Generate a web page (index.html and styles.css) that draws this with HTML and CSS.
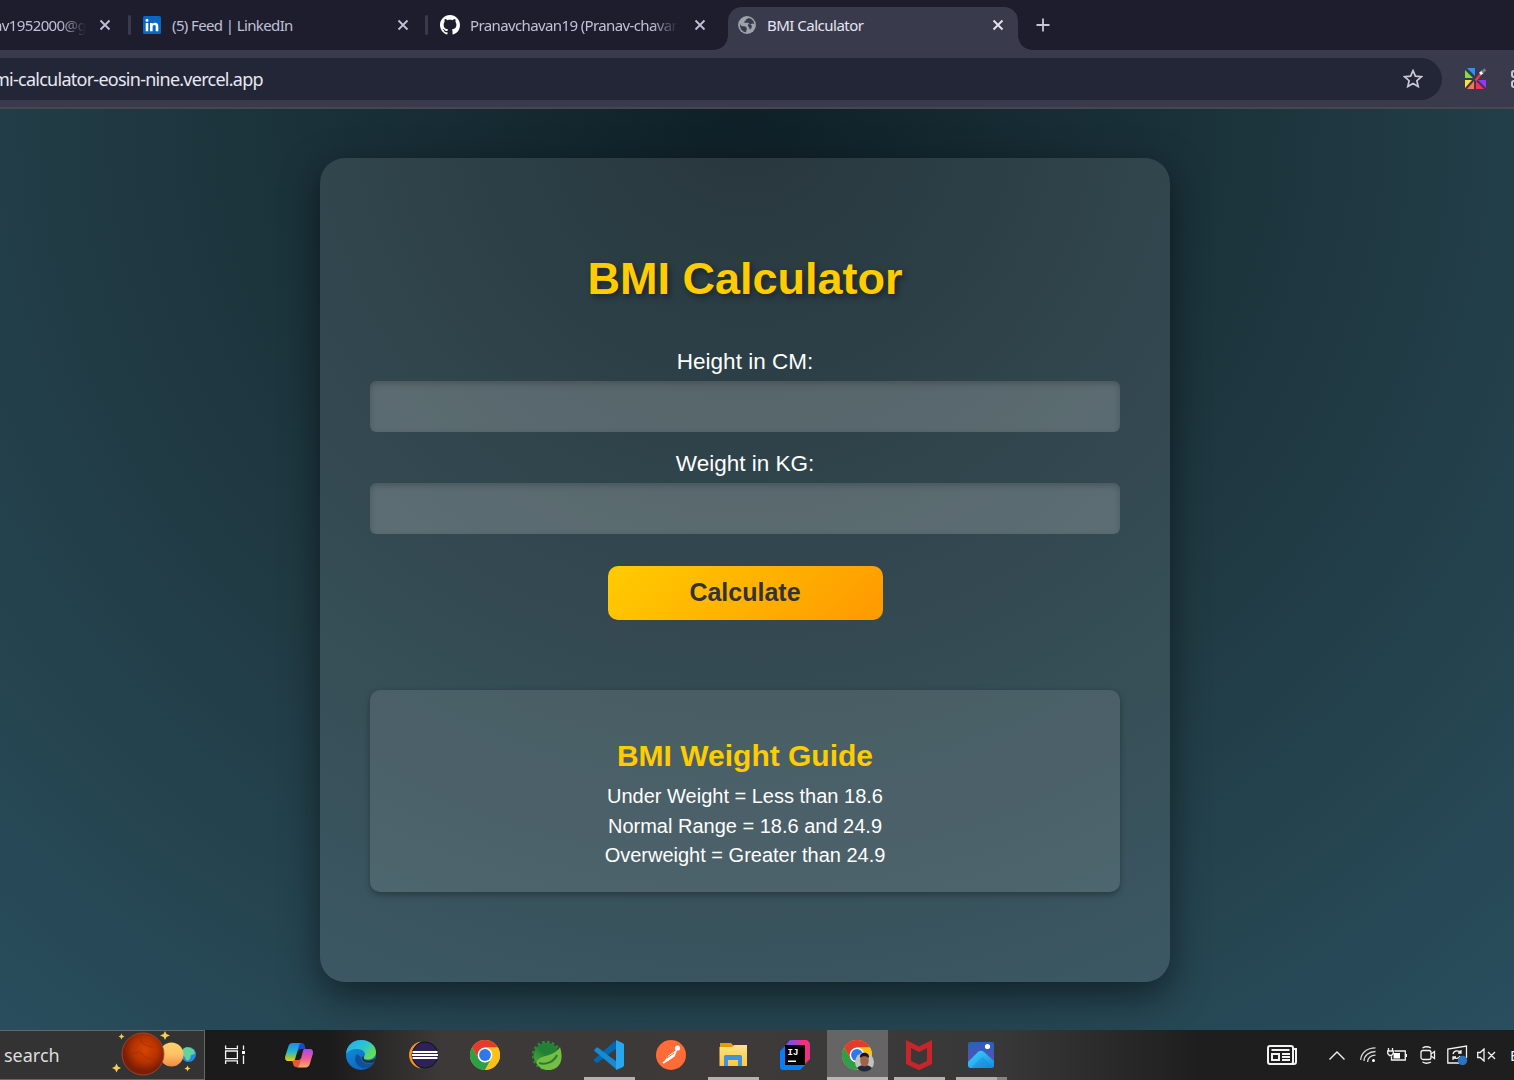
FILE: index.html
```html
<!DOCTYPE html>
<html lang="en">
<head>
<meta charset="utf-8">
<title>BMI Calculator</title>
<link rel="stylesheet" href="styles.css">
</head>
<body>
<div class="screen">
  <header class="browser">
    <div class="tabs">
      <div class="tab tab-mail">
        <span class="tab-title fade">av1952000@g</span>
        <svg class="close" viewBox="0 0 12 12"><path d="M1.5 1.5l9 9M10.5 1.5l-9 9"/></svg>
      </div>
      <i class="divider"></i>
      <div class="tab tab-linkedin">
        <svg class="favicon" viewBox="0 0 18 18"><rect width="18" height="18" rx="1.5" fill="#0a66c2"/><path fill="#fff" d="M2.7 7h2.6v8.3H2.7zM4 2.8a1.5 1.5 0 1 1 0 3 1.5 1.5 0 0 1 0-3zM7 7h2.5v1.2c.5-.9 1.400-1.4 2.600-1.400 2.400 0 3.200 1.500 3.200 3.800v4.700h-2.600v-4.200c0-1.200-.2-2.100-1.400-2.100-1.300 0-1.700.9-1.700 2.100v4.200H7z"/></svg>
        <span class="tab-title">(5) Feed | LinkedIn</span>
        <svg class="close" viewBox="0 0 12 12"><path d="M1.500 1.500l9 9M10.500 1.500l-9 9"/></svg>
      </div>
      <i class="divider"></i>
      <div class="tab tab-github">
        <svg class="favicon github" viewBox="0 0 16 16"><path fill="#fff" d="M8 0C3.580 0 0 3.580 0 8c0 3.540 2.290 6.530 5.470 7.590.4.070.55-.17.55-.38 0-.19-.01-.82-.01-1.490-2.010.37-2.530-.49-2.690-.94-.09-.23-.48-.94-.82-1.130-.28-.15-.68-.52-.01-.53.63-.01 1.080.58 1.230.82.72 1.210 1.870.87 2.330.66.07-.52.28-.87.51-1.070-1.780-.2-3.640-.89-3.640-3.950 0-.87.31-1.590.82-2.150-.08-.2-.36-1.020.08-2.120 0 0 .67-.21 2.200.82.64-.18 1.320-.27 2-.27s1.360.09 2 .27c1.530-1.040 2.200-.82 2.200-.82.44 1.100.16 1.920.08 2.120.51.56.82 1.270.82 2.150 0 3.070-1.870 3.750-3.650 3.950.29.25.54.73.54 1.480 0 1.070-.01 1.930-.01 2.200 0 .21.15.46.55.38A8.010 8.010 0 0 0 16 8c0-4.420-3.580-8-8-8z"/></svg>
        <span class="tab-title fade">Pranavchavan19 (Pranav-chavan</span>
        <svg class="close" viewBox="0 0 12 12"><path d="M1.500 1.500l9 9M10.500 1.500l-9 9"/></svg>
      </div>
      <div class="tab tab-active">
        <svg class="favicon" viewBox="0 0 18 18"><circle cx="9" cy="9" r="8.900" fill="#9da3ab"/><path fill="#393b4d" d="M2 7.500c.4 2.500 2.300 3 4.300 2.800 1.500 0 1.300 1.200 2.300 1.300l.2 1.500c.2 1.200-.8 1.200-.8 3.100-3.500-.4-6.500-3.500-6-8.700zM10.500 1.900c-1 1.100-2.600 1-2.700 2.300 0 .9-1.800.8-1.700 2 .3 1.100 2.200.5 3.700.5 1.200.1 1.200 1.500 2.400 1.600 1 .1 1.100-.9 2.400-.8l1.700.8C16.200 5 14 2.500 10.500 1.900zM10 8.300c1.500-.4 2.900.1 3.700 1.200.4 1.900-.4 3.500-1.900 3.900l-.7-2.200c-.9-.2-1.500-1.500-1.100-2.900z"/></svg>
        <span class="tab-title">BMI Calculator</span>
        <svg class="close" viewBox="0 0 12 12"><path d="M1.500 1.500l9 9M10.500 1.500l-9 9"/></svg>
      </div>
      <svg class="new-tab" viewBox="0 0 14 14"><path d="M7 .5v13M.5 7h13"/></svg>
    </div>
    <div class="toolbar">
      <div class="address">
        <span class="url">mi-calculator-eosin-nine.vercel.app</span>
        <svg class="star" viewBox="0 0 20 20"><path d="M10 1.700l2.400 5.500 6 .5-4.500 4 1.300 5.900L10 14.500l-5.200 3.100 1.300-5.900-4.500-4 6-.5z"/></svg>
      </div>
      <svg class="extension" viewBox="0 0 22 22"><path fill="#2893ff" d="M2 0h8v8z"/><path fill="#83d94c" d="M0 2l8 8H0z"/><path fill="#ffe23c" d="M0 12h7l-7 8z"/><path fill="#ff7250" d="M9 13v8H2z"/><path fill="#ff2d55" d="M11 13l8 8h-8z"/><path fill="#9138ff" d="M13 12h8v8z"/><path d="M10.500 12.500l5-6" stroke="#ff304e" stroke-width="2.400"/><path d="M15 6l2.500-2" stroke="#fff" stroke-width="3"/><path d="M17 4l3.500-2.500" stroke="#77787f" stroke-width="3"/></svg>
      <svg class="apps" viewBox="0 0 8 18" fill="none" stroke="#c9cada" stroke-width="2"><rect x="1" y="1" width="7" height="6" rx="2"/><rect x="1" y="11" width="7" height="6" rx="2"/></svg>
    </div>
  </header>

  <main class="page">
    <section class="card">
      <h1>BMI Calculator</h1>
      <form class="form">
        <label for="height">Height in CM:</label>
        <input id="height" type="text">
        <label for="weight">Weight in KG:</label>
        <input id="weight" type="text">
        <button type="button">Calculate</button>
      </form>
      <div class="guide">
        <h2>BMI Weight Guide</h2>
        <p>Under Weight = Less than 18.6</p>
        <p>Normal Range = 18.6 and 24.9</p>
        <p>Overweight = Greater than 24.9</p>
      </div>
    </section>
  </main>

  <footer class="taskbar">
    <svg class="defs" width="0" height="0">
      <defs>
        <radialGradient id="mars" cx=".55" cy=".4"><stop offset="0" stop-color="#d94400"/><stop offset=".6" stop-color="#b53300"/><stop offset="1" stop-color="#7c1e06"/></radialGradient>
        <linearGradient id="venus" x2="0" y2="1"><stop offset="0" stop-color="#ffd36b"/><stop offset=".5" stop-color="#ffc065"/><stop offset="1" stop-color="#ef8c43"/></linearGradient>
        <linearGradient id="copA" x2="0" y2="1"><stop offset="0" stop-color="#1b8df0"/><stop offset=".5" stop-color="#28b8cf"/><stop offset=".8" stop-color="#9bc53e"/><stop offset="1" stop-color="#f4cc20"/></linearGradient>
        <linearGradient id="copB" x2="0" y2="1"><stop offset="0" stop-color="#a24cf0"/><stop offset=".5" stop-color="#ea5a95"/><stop offset="1" stop-color="#ffae5c"/></linearGradient>
        <linearGradient id="edgeA" x1="0" x2="1" y2=".6"><stop offset="0" stop-color="#28a9ee"/><stop offset=".6" stop-color="#2cc6cf"/><stop offset="1" stop-color="#68e04c"/></linearGradient>
        <linearGradient id="edgeB" x2=".5" y2="1"><stop offset="0" stop-color="#1592df"/><stop offset="1" stop-color="#0b67c0"/></linearGradient>
        <linearGradient id="ij" x1=".3" x2="1"><stop offset="0" stop-color="#8a4ae0"/><stop offset=".7" stop-color="#ff2d70"/><stop offset="1" stop-color="#e53293"/></linearGradient>
        <linearGradient id="photo" x2="0" y2="1"><stop offset="0" stop-color="#2463bb"/><stop offset="1" stop-color="#7047b8"/></linearGradient>
        <linearGradient id="hill" x2="1" y2="1"><stop offset="0" stop-color="#3fd6fb"/><stop offset="1" stop-color="#128ce0"/></linearGradient>
        <linearGradient id="folder" x2="0" y2="1"><stop offset="0" stop-color="#ffe18a"/><stop offset="1" stop-color="#fdc83d"/></linearGradient>
        <linearGradient id="spring" x1="1" x2="0" y2="1"><stop offset="0" stop-color="#2a7f36"/><stop offset=".5" stop-color="#1f8134"/><stop offset="1" stop-color="#61b53c"/></linearGradient>
        <symbol id="chrome" viewBox="0 0 30 30"><circle cx="15" cy="15" r="15" fill="#fbc116"/><path fill="#e33b2e" d="M2 7.500A15 15 0 0 1 28 7.500H15L8.500 19z"/><path fill="#2c9f47" d="M2 7.500l6.500 11.300 6.500 3.700 6-3.500L15 30A15 15 0 0 1 2 7.500z"/><path fill="#fbc116" d="M15 7.500h13A15 15 0 0 1 15 30l6.500-11.300z"/><circle cx="15" cy="15" r="7.400" fill="#fff"/><circle cx="15" cy="15" r="5.900" fill="#2d78ea"/></symbol>
      </defs>
    </svg>
    <div class="search">
      <span>search</span>
      <svg class="planets" viewBox="0 0 86 48"><circle cx="75.500" cy="23.500" r="7.500" fill="#2588e7"/><path fill="#62d39a" d="M70 18c3-3 7-2 11 1l1 4-4 1-1 4-3 2-3-5-3-2z"/><circle cx="58.500" cy="23.500" r="12" fill="url(#venus)"/><circle cx="30" cy="23" r="21" fill="url(#mars)" stroke="#a64b32" stroke-width=".8"/><path d="M15 20c4 7 10-3 14 3s11 4 17 8M28 4c-3 8 5 11 12 12M18 34c9 3 17 3 25-2" fill="none" stroke="#9c2b05" stroke-width="1.500" opacity=".35"/><g fill="#f8cf55"><path d="M52 0l1.400 3.100L57 4.500l-3.600 1.400L52 9l-1.400-3.100L47 4.500l3.600-1.400z"/><path d="M8.500 2.500l.9 2.100 2.100.9-2.100.9-.9 2.100-.9-2.100-2.100-.9 2.100-.9z"/><path d="M3.500 32.500l1.400 3.100L8 37l-3.100 1.400-1.400 3.100-1.400-3.100L-1 37l3.100-1.400z"/><path d="M74.500 34.500l.9 2.100 2.100.9-2.100.9-.9 2.100-.9-2.100-2.100-.9 2.100-.9z"/></g></svg>
    </div>
    <svg class="task-view" viewBox="0 0 22 20" fill="none" stroke="#f4f4f4" stroke-width="1.300"><path d="M1.600.5v3.200h11.800V.5M1.600 19v-3.200h11.800V19M1.600 6h11.800v7.600H1.600zM19.500.5v4.300M19.500 10.500V19"/><path fill="#fff" stroke="none" d="M18 6h3v3h-3z"/></svg>
    <nav class="apps-row">
      <a class="app"><svg viewBox="0 0 30 30"><path fill="#1b48cc" d="M13 3h4.500c2 0 2.800 1 3.300 3l.7 3h-4.200c-2 0-3 1-3.500 3z"/><path fill="#e8563a" d="M8 20h7l4-3-2.300 7c-.8 2.300-1.700 3-3.500 3H12c-1.700 0-2.400-1-2.900-3z"/><path fill="url(#copA)" d="M8.500 3H18c-2 0-2.500 1-3 2.800l-3.800 13c-.5 1.700-1.500 2.200-3.200 2.200H4.500C1.500 21 .6 19 1.300 16L4.500 6c.7-2 2-3 4-3z"/><path fill="url(#copB)" d="M20.500 9h5c3 0 4 2 3.300 5l-3 10c-.7 2-2 3.500-4.300 3.500H12c2 0 3-1 3.500-3l3.300-13c.4-1.500.9-2.200 1.700-2.500z"/></svg></a>
      <a class="app"><svg viewBox="0 0 30 30"><circle cx="15" cy="15" r="15" fill="url(#edgeB)"/><path fill="#124f99" d="M11 14c-5 7 1 14 8 14 4 0 7-2 9-5-5 2-13 1-13-6z"/><path fill="url(#edgeA)" d="M0 14C1 5 7 0 15 0c9 0 15 6 15 12 0 5-4 7.500-8 7.500-4 0-5-1.500-4-2.500 3-4-1-8-7-8-5 0-9 2-11 5z"/><path fill="#2f2d2c" d="M18 17c-1 2 1 3.500 5 3.500 3 0 5-1 6.500-3-.2 1.800-.6 3.200-1.500 4.500-5 2-12 .5-12-4 0-1 1-2 2-1z"/></svg></a>
      <a class="app"><svg viewBox="0 0 30 30"><path fill="#f7941e" d="M13 1.500A13.600 13.600 0 0 0 13 28.500 15 15 0 0 1 13 1.500z"/><circle cx="17" cy="15" r="13" fill="#2c2255" stroke="#14121e" stroke-width="1"/><path d="M4.500 12h25M4 15h26M4.500 18h25" stroke="#fff" stroke-width="1.900"/></svg></a>
      <a class="app"><svg><use href="#chrome"/></svg></a>
      <a class="app"><svg viewBox="0 0 30 30"><circle cx="14.500" cy="15.500" r="12.800" fill="url(#spring)"/><circle cx="14.500" cy="15.500" r="13.500" fill="none" stroke="#2f8635" stroke-width="2.600" stroke-dasharray="2.600 2.300"/><path fill="#75bd43" d="M28 7c2.500 8 3 18-6 22-7 3-14 0-17-5-1-10 17-6 23-17z"/><path d="M7 23c7 2 15-1 18-8" fill="none" stroke="#277c33" stroke-width="2"/></svg></a>
      <a class="app open"><svg viewBox="0 0 30 30"><path fill="#0069b4" d="M0 19.500L21 1l2 7L4 22.500c-1 .7-1.500.5-2 0L.2 21c-.6-.6-.5-1-.2-1.500z"/><path fill="#168bd2" d="M0 10.500l2.200-2.700c.7-.6 1.300-.5 2 0L23 22l-1 7L.2 10.800z"/><path fill="#28a6f0" d="M22 0l6.500 3c1 .5 1.500 1 1.500 2v20c0 1-.5 1.700-1.500 2.200L22 30V0z"/></svg></a>
      <a class="app"><svg viewBox="0 0 30 30"><circle cx="15" cy="15" r="15" fill="#ff6c37"/><circle cx="21.500" cy="8" r="2.600" fill="#fff"/><path d="M8 23l5-7 7-5-2 5-6 4-5 3" fill="#fff" stroke="#fff" stroke-width="1.500"/><path d="M11 18l7-5" stroke="#ff6c37"/></svg></a>
      <a class="app open"><svg viewBox="0 0 30 30"><path fill="#dda003" d="M2 3h11l2 2v4H2z"/><path fill="url(#folder)" d="M1.500 7H14l2-2h13v21H1.500z"/><path fill="#3d96dd" d="M6 17c0-1.500.7-2 2-2h14c1.500 0 2 .7 2 2v9h-4v-6H10v6H6z"/></svg></a>
      <a class="app"><svg viewBox="0 0 30 30"><path fill="url(#ij)" d="M10 0h15c3 0 5 2 5 5v14l-9 9L5 6z"/><path fill="#087cfa" d="M0 11l6-6 14 20h5l-5 5H3c-2 0-3-1-3-3z"/><path d="M5 5h20v20H5z"/><text class="ij" x="7.500" y="15">IJ</text><path fill="#fff" d="M8 20.500h8V22H8z"/></svg></a>
      <a class="app current"><svg viewBox="0 0 34 34" class="profile"><svg width="30" height="30" viewBox="0 0 30 30"><use href="#chrome"/></svg><circle cx="22.500" cy="22" r="9.500" fill="#c4c2c1"/><path fill="#25283a" d="M15 28c3-4 12-4 15 0-4 5-11 5-15 0z"/><ellipse cx="22.500" cy="20.500" rx="4.300" ry="6" fill="#9c6549"/><path fill="#191617" d="M18 18c-1-7 10-7 9 0-2-2.500-7-2.500-9 0z"/></svg></a>
      <a class="app open"><svg viewBox="0 0 30 30"><path fill="#c8252a" d="M2 0l13 6.500L28 0v24l-13 6.200L2 24zM7 8v13l8 3.700 8-3.700V8l-8 4z" fill-rule="evenodd"/></svg></a>
      <a class="app open photos"><svg viewBox="0 0 30 30"><rect x="2" y="2" width="26" height="26" rx="2" fill="url(#photo)"/><path fill="url(#hill)" d="M2 22L12 12c2-1.700 4-1.700 6 0l10 9v5l-2 2H4l-2-2z"/><path fill="#167bd8" d="M5 28l9-9 3-2 9 9-2 2z" opacity=".35"/><circle cx="21.500" cy="6.500" r="2.600" fill="#fff"/></svg></a>
    </nav>
    <div class="tray">
      <svg class="news" viewBox="0 0 30 20" fill="none" stroke="#f2f2f2" stroke-width="2"><rect x="1" y="1" width="25" height="18" rx="2"/><path d="M26 4h3v13q0 2-2 2H4M4.500 5h18M15 9h8M15 12h8M15 15h8"/><path d="M5 9h7v6H5z"/></svg>
      <svg class="up" viewBox="0 0 16 9" fill="none" stroke="#f2f2f2" stroke-width="1.400"><path d="M.5 8.500L8 1l7.500 7.500"/></svg>
      <svg class="wifi" viewBox="0 0 16 16" fill="none" stroke="#d8d8d8" stroke-width="1.300"><path d="M.7 13C1 6 7 .8 15.500.8M4 14c0-5.500 5-9.500 11.500-9.500M7.600 15c0-4 3.500-6.800 7.900-6.800"/><circle cx="13.500" cy="13.500" r="1.500" fill="#fff" stroke="none"/></svg>
      <svg class="battery" viewBox="0 0 20 16" fill="none" stroke="#f2f2f2" stroke-width="1.300"><path d="M7.500 4h10.800v9H4.500V9.500M1.500 1v3M5.500 1v3M.7 4h5.600v2.500L4.500 8.500h-2L.7 6.500zM19.400 7v3"/><path fill="#fff" stroke="none" d="M6.500 6H13v5.500H6.500z"/></svg>
      <svg class="meet" viewBox="0 0 16 18" fill="none" stroke="#f2f2f2" stroke-width="1.300"><rect x="1" y="4.500" width="10" height="9" rx="2"/><path d="M11 8l3.500-2.500v7L11 10M2.500 2C5 .4 8 .4 11 2M2.500 16c2.500 1.600 5.500 1.600 8.500 0"/></svg>
      <svg class="sync" viewBox="0 0 22 20" fill="none" stroke="#f2f2f2" stroke-width="1.300"><path d="M12 18H.8V4L19.500 1v12M6 9c1-4 6-4 8-1M14 5v3h-3M13 11c-1 3-5 3-7 1M6 15v-3h3"/><circle cx="15.500" cy="15.500" r="4.700" fill="#2b74c4" stroke="none"/></svg>
      <svg class="volume" viewBox="0 0 19 14" fill="none" stroke="#f2f2f2" stroke-width="1.300"><path d="M.7 4.500h2.500L7 1v12L3.200 9.500H.7zM11 4l7 7M18 4l-7 7"/></svg>
      <span class="lang">E</span>
    </div>
  </footer>
</div>
</body>
</html>
```
FILE: styles.css
```css
* { box-sizing: border-box; }
body { margin: 0; overflow: hidden; }
h1, h2, p { margin: 0; }
svg { display: block; flex: none; }

.screen {
  width: 1514px;
  height: 1080px;
  display: flex;
  flex-direction: column;
  overflow: hidden;
  font-family: "Noto Sans", "Open Sans", sans-serif;
}

/* Browser chrome */
.browser {
  height: 109px;
  flex: none;
  background: #393b4d;
  border-bottom: 2px solid #4a464f;
}
.tabs {
  height: 50px;
  display: flex;
  align-items: center;
  background: #1d1d2e;
  color: #c0c0d7;
}
.tab { height: 50px; display: flex; align-items: center; flex: none; }
.tab-title {
  flex: 1;
  min-width: 0;
  overflow: hidden;
  white-space: nowrap;
  font-size: 15px;
  letter-spacing: -0.62px;
  line-height: 24px;
}
.tab-mail { width: 128px; padding-right: 17px; }
.tab-mail .tab-title { flex: none; width: 86px; margin-right: 13px; display: flex; justify-content: flex-end; }
.fade { mask-image: linear-gradient(to right, #000 calc(100% - 26px), transparent); }
.divider { width: 3px; height: 20px; border-radius: 2px; background: #393b4d; flex: none; }
.tab-linkedin { width: 294px; padding: 0 16px 0 12px; }
.tab-github { width: 300px; padding: 0 22px 0 12px; }
.tab-github .favicon { width: 20px; height: 20px; margin-right: 10px; }
.tab-github .fade { flex: none; width: 208px; margin-right: 16px; }
.favicon { width: 18px; height: 18px; margin-right: 11px; }
.close { width: 12px; height: 12px; stroke: currentColor; stroke-width: 1.8; fill: none; }
.tab-active {
  position: relative;
  width: 290px;
  height: 43px;
  align-self: flex-end;
  padding: 0 14px 7px 10px;
  border-radius: 14px 14px 0 0;
  background: #393b4d;
  color: #e6e5f1;
}
.tab-active .tab-title { letter-spacing: -0.5px; }
.tab-active::before, .tab-active::after {
  content: "";
  position: absolute;
  bottom: 0;
  width: 14px;
  height: 14px;
}
.tab-active::before { left: -14px; background: radial-gradient(circle at 0 0, transparent 13.5px, #393b4d 14px); }
.tab-active::after { right: -14px; background: radial-gradient(circle at 100% 0, transparent 13.5px, #393b4d 14px); }
.new-tab { width: 14px; height: 14px; margin-left: 18px; stroke: #c6c6dc; stroke-width: 1.8; }

.toolbar { display: flex; align-items: center; height: 42px; margin-top: 8px; }
.address {
  flex: none;
  width: 1442px;
  height: 42px;
  display: flex;
  align-items: center;
  justify-content: space-between;
  padding-right: 19px;
  border-radius: 0 21px 21px 0;
  background: #232637;
}
.url { margin-left: -7px; font-size: 18px; letter-spacing: -0.74px; color: #e8e8f2; white-space: nowrap; }
.star { width: 20px; height: 20px; fill: none; stroke: #c9c9d5; stroke-width: 1.7; }
.extension { width: 22px; height: 22px; margin-left: 23px; }
.apps { width: 8px; height: 18px; margin-left: 24px; }

/* Page */
.page {
  flex: 1;
  min-height: 0;
  display: flex;
  justify-content: center;
  align-items: flex-start;
  padding: 49px 24px 0 0;
  overflow: hidden;
  background: radial-gradient(circle 1327px at 745px 0, #0f2027, #203a43 50%, #2c5364);
  font-family: "Liberation Sans", Arial, sans-serif;
}
.card {
  width: 850px;
  height: 824px;
  padding: 95px 50px 0;
  border-radius: 25px;
  background: rgba(255, 255, 255, 0.1);
  box-shadow: 0 12.5px 37.5px rgba(0, 0, 0, 0.5);
  color: #fff;
  text-align: center;
}
h1 {
  font-size: 45px;
  line-height: 52px;
  color: #ffcc00;
  text-shadow: 2.5px 2.5px 6px rgba(0, 0, 0, 0.4);
}
.form { display: flex; flex-direction: column; align-items: center; margin-top: 44px; }
label { font-size: 22.5px; line-height: 26px; margin-bottom: 6px; }
input {
  width: 750px;
  height: 51px;
  padding: 0 12px;
  border: 0;
  border-radius: 6.25px;
  background: rgba(255, 255, 255, 0.2);
  box-shadow: inset 0 2.5px 6.25px rgba(0, 0, 0, 0.2);
  color: #fff;
  font-size: 20px;
}
input + label { margin-top: 19px; }
button {
  width: 275px;
  height: 54px;
  margin-top: 32px;
  padding: 0 0 2px;
  border: 0;
  border-radius: 10px;
  background: linear-gradient(135deg, #ffcc00, #ff9900);
  color: #333;
  font: bold 25px/52px "Liberation Sans", Arial, sans-serif;
}
.guide {
  height: 202px;
  margin-top: 70px;
  padding-top: 49px;
  border-radius: 10px;
  background: rgba(255, 255, 255, 0.1);
  box-shadow: 0 2.5px 6.25px rgba(0, 0, 0, 0.3);
}
h2 { margin-bottom: 9px; font-size: 30px; line-height: 34px; color: #ffcc00; }
.guide p { font-size: 20px; line-height: 29.5px; }

/* Taskbar */
.taskbar {
  position: relative;
  height: 50px;
  flex: none;
  display: flex;
  align-items: center;
  background: linear-gradient(to right, #1c1b1b 330px, #3c3938 440px, #3d3a39 760px, #383838 1000px, #1e1e1e 1200px);
}
.defs { position: absolute; }
.search {
  flex: none;
  width: 205px;
  height: 50px;
  display: flex;
  align-items: center;
  justify-content: space-between;
  padding: 0 5px 0 4px;
  border: 1px solid #686766;
  border-left: 0;
  background: #333;
  color: #dedede;
  font-size: 18px;
}
.planets { width: 86px; height: 48px; overflow: visible; }
.task-view { width: 22px; height: 20px; margin-left: 19px; }
.apps-row { display: flex; flex: none; height: 50px; margin-left: 22px; }
.app { width: 62px; height: 50px; padding: 10px 16px; }
.app svg { width: 30px; height: 30px; }
.open { background: linear-gradient(#b4b1af, #b4b1af) 6px 100% / 51px 3px no-repeat; }
.current {
  background: linear-gradient(#b9b6b3, #b9b6b3) 0 100% / 100% 3px no-repeat, #656565;
  width: 61px;
  margin-left: 1px;
  padding-left: 15px;
}
.app .profile { width: 34px; height: 34px; }
.app .profile svg { width: 30px; height: 30px; }
.photos { background: linear-gradient(to right, #b4b1af 41px, #858483 41px) 6px 100% / 51px 3px no-repeat; }
.ij { font: bold 9px "Liberation Mono", monospace; fill: #fff; }

.tray { display: flex; align-items: center; flex: none; height: 50px; margin-left: 255px; }
.news { width: 30px; height: 20px; }
.up { width: 16px; height: 9px; margin-left: 32px; }
.wifi { width: 16px; height: 16px; margin-left: 15px; }
.battery { width: 20px; height: 16px; margin-left: 11px; }
.meet { width: 16px; height: 18px; margin-left: 13px; }
.sync { width: 22px; height: 20px; margin-left: 11px; }
.volume { width: 19px; height: 14px; margin-left: 8px; }
.lang { margin-left: 14px; color: #f2f2f2; font-size: 15px; white-space: nowrap; }
```
